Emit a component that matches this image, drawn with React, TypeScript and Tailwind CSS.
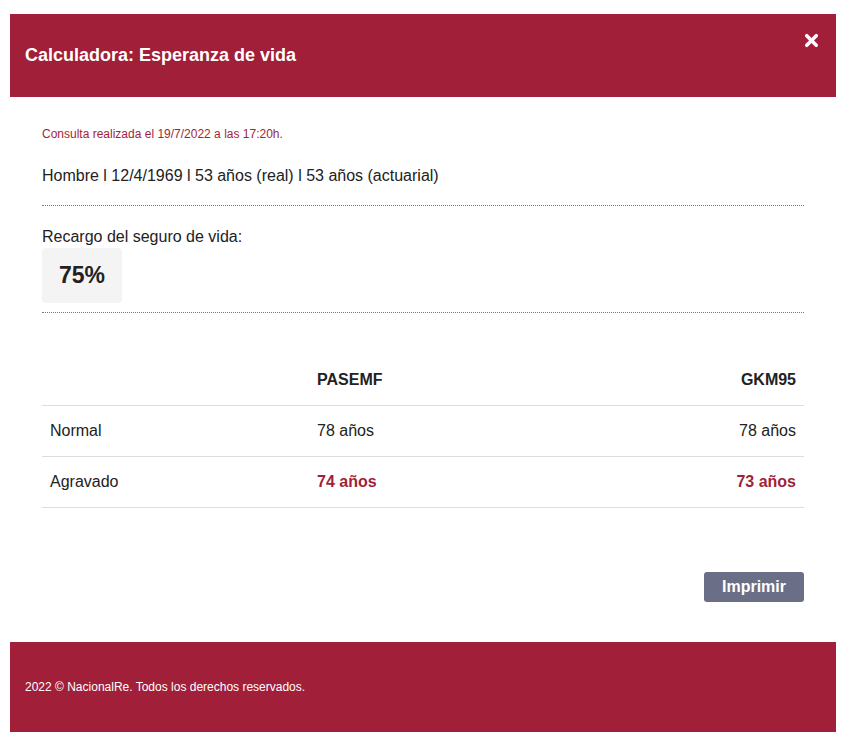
import { X } from 'lucide-react';

const rows = [
  { label: 'Normal', a: '78 años', b: '78 años', strong: false },
  { label: 'Agravado', a: '74 años', b: '73 años', strong: true },
];

export default function App() {
  return (
    <div className="min-h-screen bg-white pt-[14px] pl-[10px] pr-[11px] font-['Liberation_Sans',Arial,sans-serif] text-[#222]">
      {/* Header */}
      <div className="relative h-[83px] bg-[#a11f38] flex items-center px-[15px]">
        <h1 className="text-[18px] font-bold text-white">Calculadora: Esperanza de vida</h1>
        <button className="absolute right-[15px] top-[17px] text-white">
          <X size={19} strokeWidth={4.5} />
        </button>
      </div>

      {/* Body */}
      <div className="px-[32px] pt-[29px] pb-[40px]">
        <p className="text-[12px] leading-[16px] text-[#a11f38]">Consulta realizada el 19/7/2022 a las 17:20h.</p>
        <p className="mt-[25px] text-[16px] leading-[18px]">Hombre l 12/4/1969 l 53 años (real) l 53 años (actuarial)</p>
        <div className="mt-[20px] border-t border-dotted border-[#777]" />
        <p className="mt-[22px] text-[16px] leading-[18px]">Recargo del seguro de vida:</p>
        <div className="mt-[2px] w-[80px] h-[55px] rounded bg-[#f4f4f4] flex items-center justify-center text-[23px] font-bold">75%</div>
        <div className="mt-[9px] border-t border-dotted border-[#777]" />

        <div className="mt-[42px] text-[16px]">
          <div className="grid grid-cols-[267px_1fr_1fr] h-[51px] items-center border-b border-[#ddd] font-bold">
            <div />
            <div className="px-[8px]">PASEMF</div>
            <div className="px-[8px] text-right">GKM95</div>
          </div>
          {rows.map(r => (
            <div key={r.label} className="grid grid-cols-[267px_1fr_1fr] h-[51px] items-center border-b border-[#ddd]">
              <div className="px-[8px]">{r.label}</div>
              <div className={`px-[8px] ${r.strong ? 'font-bold text-[#a11f38]' : ''}`}>{r.a}</div>
              <div className={`px-[8px] text-right ${r.strong ? 'font-bold text-[#a11f38]' : ''}`}>{r.b}</div>
            </div>
          ))}
        </div>

        <div className="mt-[64px] flex justify-end">
          <button className="w-[100px] h-[30px] rounded-[3px] bg-[#6b6e87] text-white text-[16px] font-bold">Imprimir</button>
        </div>
      </div>

      {/* Footer */}
      <div className="h-[90px] bg-[#a11f38] flex items-center px-[15px]">
        <p className="text-[12px] text-white">2022 © NacionalRe. Todos los derechos reservados.</p>
      </div>
    </div>
  );
}
